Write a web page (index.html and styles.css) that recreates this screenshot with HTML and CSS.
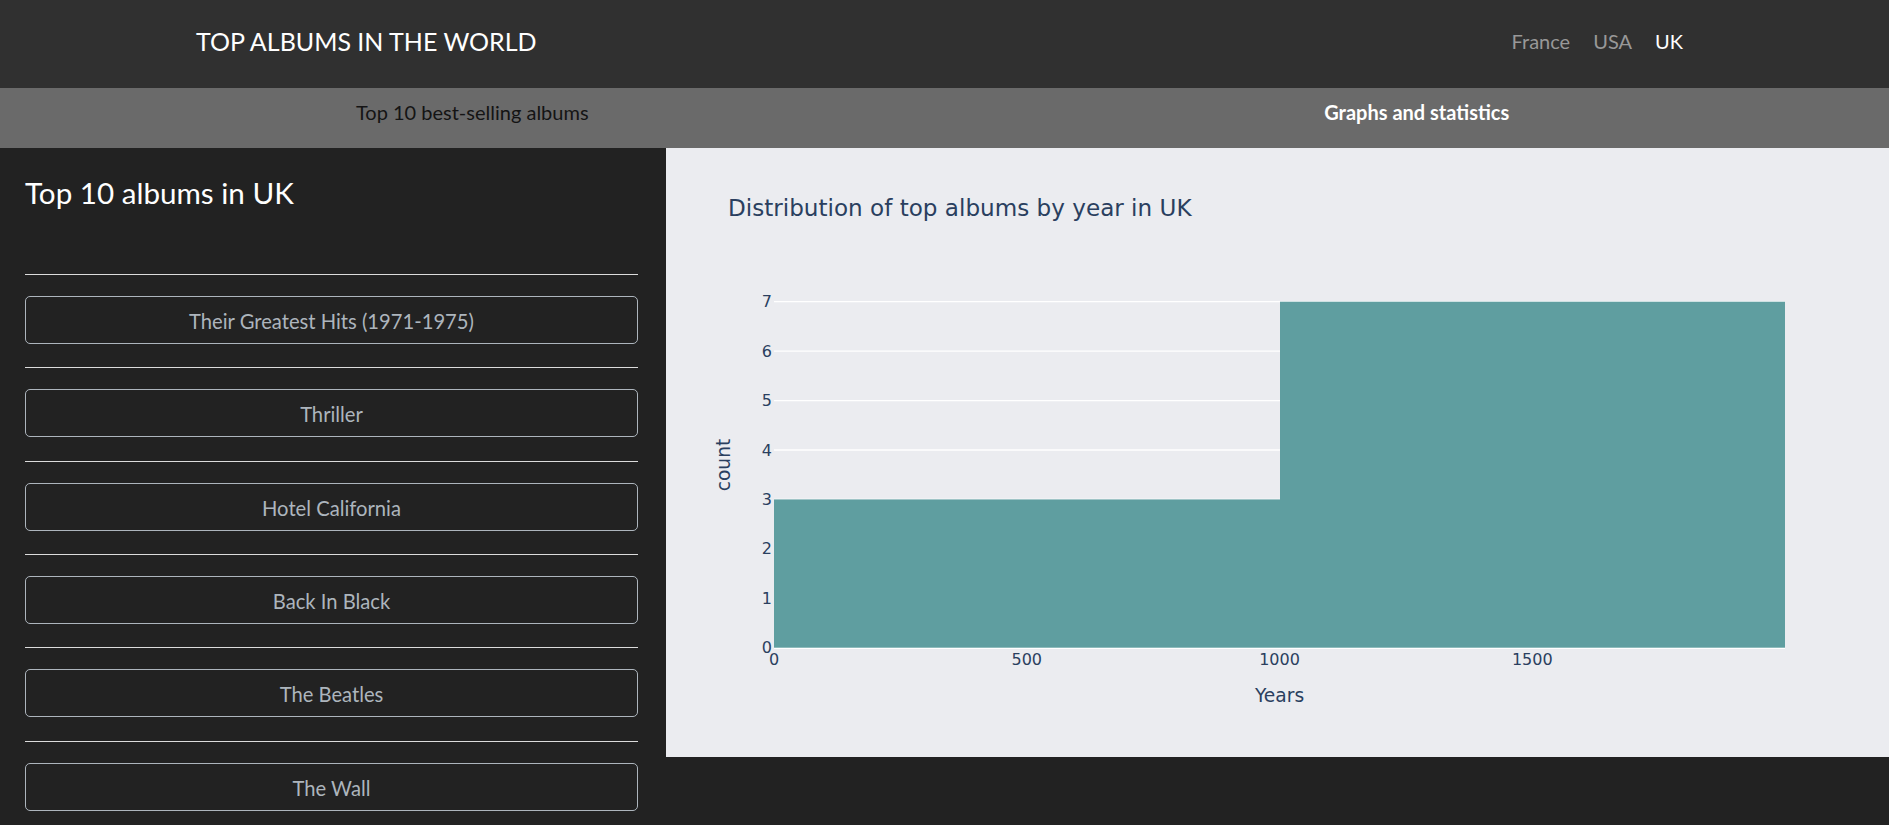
FILE: index.html
```html
<!DOCTYPE html>
<html lang="en">
<head>
<meta charset="utf-8">
<title>Top albums in the world</title>
<link rel="stylesheet" href="styles.css">
</head>
<body>
<div class="page">
  <header class="topbar">
    <div class="brand">TOP ALBUMS IN THE WORLD</div>
    <nav class="countries">
      <a class="country">France</a>
      <a class="country">USA</a>
      <a class="country active">UK</a>
    </nav>
  </header>
  <div class="tabs">
    <div class="tab">Top 10 best-selling albums</div>
    <div class="tab tab-active">Graphs and statistics</div>
  </div>
  <main class="content">
    <aside class="sidebar">
      <h2 class="sidebar-title">Top 10 albums in UK</h2>
      <hr class="divider"><button class="album">Their Greatest Hits (1971-1975)</button>
      <hr class="divider"><button class="album">Thriller</button>
      <hr class="divider"><button class="album">Hotel California</button>
      <hr class="divider"><button class="album">Back In Black</button>
      <hr class="divider"><button class="album">The Beatles</button>
      <hr class="divider"><button class="album">The Wall</button>
    </aside>
    <section class="chart-panel">
      <svg class="chart" viewBox="0 0 1223 609" width="1223" height="609">
        <text class="chart-title" x="62" y="68">Distribution of top albums by year in UK</text>
        <g class="grid">
          <line x1="108" x2="1119" y1="450.27" y2="450.27"/>
          <line x1="108" x2="1119" y1="400.84" y2="400.84"/>
          <line x1="108" x2="1119" y1="351.41" y2="351.41"/>
          <line x1="108" x2="1119" y1="301.98" y2="301.98"/>
          <line x1="108" x2="1119" y1="252.55" y2="252.55"/>
          <line x1="108" x2="1119" y1="203.12" y2="203.12"/>
          <line x1="108" x2="1119" y1="153.69" y2="153.69"/>
        </g>
        <line class="zeroline" x1="108" x2="1119" y1="499.7" y2="499.7"/>
        <rect class="bar" x="108" y="351.41" width="506" height="148.29"/>
        <rect class="bar" x="614" y="153.69" width="505" height="346.01"/>
        <g class="yticks">
          <text x="106" y="505.3">0</text>
          <text x="106" y="455.9">1</text>
          <text x="106" y="406.4">2</text>
          <text x="106" y="357">3</text>
          <text x="106" y="307.6">4</text>
          <text x="106" y="258.2">5</text>
          <text x="106" y="208.7">6</text>
          <text x="106" y="159.3">7</text>
        </g>
        <g class="xticks">
          <text x="108" y="517">0</text>
          <text x="360.75" y="517">500</text>
          <text x="613.5" y="517">1000</text>
          <text x="866.25" y="517">1500</text>
        </g>
        <text class="axis-title" x="613.5" y="554" text-anchor="middle">Years</text>
        <text class="axis-title" transform="translate(64 317) rotate(-90)" text-anchor="middle">count</text>
      </svg>
    </section>
  </main>
</div>
</body>
</html>
```
FILE: styles.css
```css
html, body {
  margin: 0;
  padding: 0;
  background: #222222;
}

body {
  font-family: Lato, "Noto Sans", sans-serif;
  color: #ffffff;
}

.page {
  height: 100vh;
  display: flex;
  flex-direction: column;
  overflow: hidden;
}

.topbar {
  height: 88px;
  flex: none;
  background: #303030;
  display: flex;
  align-items: flex-start;
  justify-content: space-between;
  padding: 26px 206px 0 196px;
  box-sizing: border-box;
}

.brand {
  font-size: 25px;
  line-height: 30px;
  color: #ffffff;
}

.countries {
  display: flex;
  gap: 23px;
  padding-top: 3px;
}

.country {
  font-size: 20px;
  line-height: 24px;
  color: #989898;
  text-decoration: none;
}

.country.active {
  color: #ffffff;
}

.tabs {
  height: 60px;
  flex: none;
  background: #6a6a6a;
  display: flex;
}

.tab {
  flex: 1;
  text-align: center;
  font-size: 20px;
  line-height: 24px;
  padding-top: 12px;
  color: #141414;
}

.tab-active {
  color: #ffffff;
  font-weight: 700;
}

.content {
  flex: 1;
  min-height: 0;
  display: flex;
  align-items: flex-start;
}

.sidebar {
  width: 666px;
  flex: none;
  align-self: stretch;
  box-sizing: border-box;
  padding: 27px 28px 0 25px;
  overflow: hidden;
  display: flex;
  flex-direction: column;
}

.sidebar-title {
  margin: 0 0 63px;
  font-size: 29.6px;
  line-height: 36px;
  font-weight: 400;
  color: #ffffff;
}

.divider {
  margin: 0;
  border: 0;
  height: 1px;
  background: #dcdcdc;
  flex: none;
}

.album {
  flex: none;
  margin: 21px 0 23.33px;
  height: 48px;
  width: 100%;
  background: transparent;
  border: 1px solid #adb5bd;
  border-radius: 5px;
  color: #adb5bd;
  font-family: Lato, "Noto Sans", sans-serif;
  font-size: 20.2px;
  line-height: 30px;
  padding: 2px 12px 0;
  text-align: center;
}

.chart-panel {
  flex: 1;
  height: 609px;
  background: #ebecf0;
}

.chart {
  display: block;
  width: 100%;
  height: 100%;
  font-family: "DejaVu Sans", Verdana, sans-serif;
}

.chart-title {
  font-size: 23.1px;
  fill: #2a3f5f;
}

.grid line {
  stroke: #ffffff;
  stroke-width: 1.33;
}

.zeroline {
  stroke: #ffffff;
  stroke-width: 2.67;
}

.bar {
  fill: #5f9ea0;
}

.yticks text {
  font-size: 16px;
  fill: #2a3f5f;
  text-anchor: end;
}

.xticks text {
  font-size: 16px;
  fill: #2a3f5f;
  text-anchor: middle;
}

.axis-title {
  font-size: 18.67px;
  fill: #2a3f5f;
}
```
